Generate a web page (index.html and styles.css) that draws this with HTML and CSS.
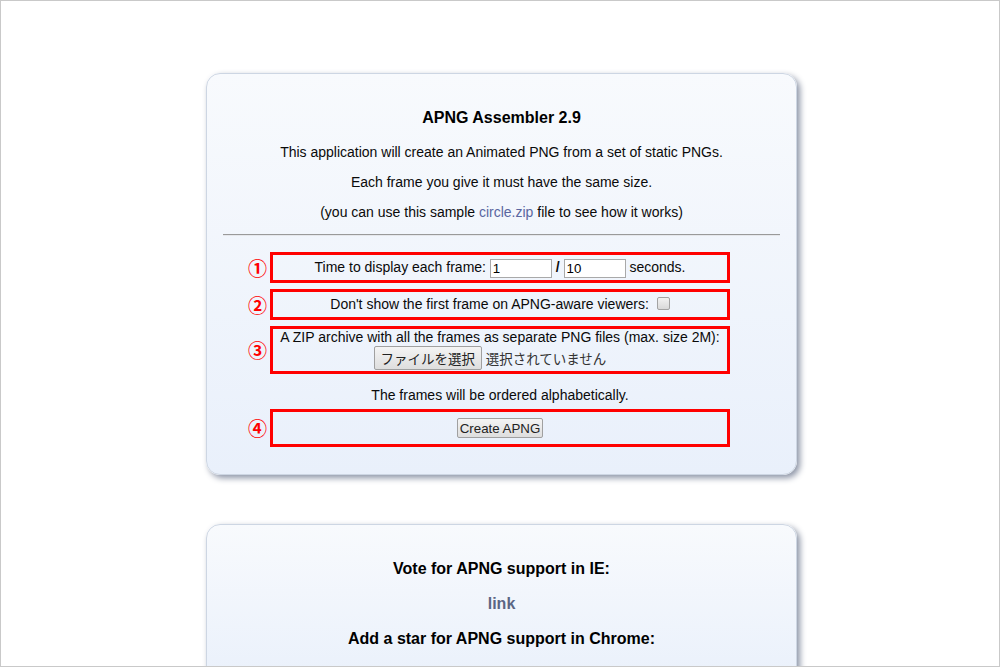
FILE: index.html
```html
<!DOCTYPE html>
<html lang="en">
<head>
  <meta charset="UTF-8" />
  <meta name="viewport" content="width=device-width, initial-scale=1.0" />
  <title>APNG Assembler</title>
  <link rel="stylesheet" href="styles.css">
</head>
<body>
  <div class="frame">
    <div class="card">
      <h3 class="card-title">APNG Assembler 2.9</h3>
      <p>This application will create an Animated PNG from a set of static PNGs.</p>
      <p>Each frame you give it must have the same size.</p>
      <p>(you can use this sample <a href="#">circle.zip</a> file to see how it works)</p>
      <hr />

      <form class="assembler">
        <div class="field">
          <span class="mark">①</span>
          Time to display each frame:
          <input type="text" class="num" value="1" />
          <b>/</b>
          <input type="text" class="num" value="10" />
          seconds.
        </div>

        <div class="field">
          <span class="mark">②</span>
          Don't show the first frame on APNG-aware viewers:
          <input type="checkbox" class="check" />
        </div>

        <div class="field field-file">
          <span class="mark">③</span>
          <div class="file-label">A ZIP archive with all the frames as separate PNG files (max. size 2M):</div>
          <div class="file-row">
            <button type="button" class="btn btn-file">ファイルを選択</button>
            <span class="file-name">選択されていません</span>
          </div>
        </div>

        <p class="note">The frames will be ordered alphabetically.</p>

        <div class="field field-submit">
          <span class="mark">④</span>
          <button type="button" class="btn">Create APNG</button>
        </div>
      </form>
    </div>

    <div class="card">
      <h3 class="card-title">Vote for APNG support in IE:</h3>
      <a href="#" class="big-link">link</a>
      <h3 class="card-title">Add a star for APNG support in Chrome:</h3>
    </div>
  </div>
</body>
</html>
```

FILE: styles.css
```css
body {
  margin: 0;
  font-family: "Liberation Sans", Arial, sans-serif;
  font-size: 14px;
  color: #0a0a0a;
  background: #fff;
}

.frame {
  box-sizing: border-box;
  height: 667px;
  border: 1px solid #c9c9c9;
  overflow: hidden;
  padding-left: 3px;
}

.card {
  width: 557px;
  margin: 72px auto 49px;
  padding: 35px 16px 27px;
  border: 1px solid #cdd6e3;
  border-radius: 14px;
  background: linear-gradient(#f8fafd, #e9f0fb);
  box-shadow: 3px 3px 6px #8c94a6;
  text-align: center;
}

.card + .card {
  margin-top: 0;
}

.card-title {
  margin: 0 0 17px;
  font-size: 16px;
  line-height: 18px;
  color: #000;
}

p {
  margin: 0 0 14px;
  line-height: 16px;
}

a {
  color: #5a66a0;
  text-decoration: none;
}

hr {
  margin: 0 0 16px;
  border: none;
  border-top: 1px solid #9a9a9a;
  border-bottom: 1px solid #e6e8ec;
}

.assembler {
  width: 460px;
  margin: 0 0 0 47px;
}

.field {
  position: relative;
  border: 3px solid #f00;
  line-height: 25px;
  margin-bottom: 6px;
}

.mark {
  position: absolute;
  left: -25px;
  top: 50%;
  transform: translateY(-50%);
  font-family: "Noto Sans CJK JP", sans-serif;
  font-size: 19px;
  font-weight: bold;
  line-height: 20px;
  color: #f00;
}

.num {
  box-sizing: border-box;
  width: 62px;
  height: 19px;
  padding: 1px 2px;
  border: 1px solid #a9a9a9;
  font-family: "Liberation Sans", Arial, sans-serif;
  font-size: 13.3px;
  vertical-align: middle;
  background: #fff;
}

.check {
  appearance: none;
  width: 13px;
  height: 13px;
  margin: 0 0 0 4px;
  border: 1px solid #a3a3a3;
  border-radius: 2px;
  background: linear-gradient(#f2f2f2, #d9d9d9);
  vertical-align: -1px;
}

.field-file {
  line-height: 16px;
}

.file-row {
  height: 26px;
  display: flex;
  align-items: center;
  justify-content: center;
  gap: 4px;
  padding-right: 20px;
}

.file-name {
  font-family: "Noto Sans CJK JP", sans-serif;
  font-size: 13.5px;
  color: #333;
}

.btn {
  height: 20px;
  padding: 0 2px;
  border: 1px solid #a0a0a0;
  border-radius: 2px;
  background: linear-gradient(#f4f4f4, #dedede);
  font-family: "Liberation Sans", Arial, sans-serif;
  font-size: 13.3px;
  color: #222;
}

.btn-file {
  height: 24px;
  width: 108px;
  padding: 0;
  font-family: "Noto Sans CJK JP", sans-serif;
  font-size: 13.5px;
}

.note {
  margin: 13px 0 6px;
}

.field-submit {
  display: flex;
  align-items: center;
  justify-content: center;
  height: 32px;
  margin-bottom: 0;
}

.big-link {
  display: block;
  margin-bottom: 17px;
  font-size: 16px;
  font-weight: bold;
  line-height: 18px;
  color: #5b6684;
}
```
